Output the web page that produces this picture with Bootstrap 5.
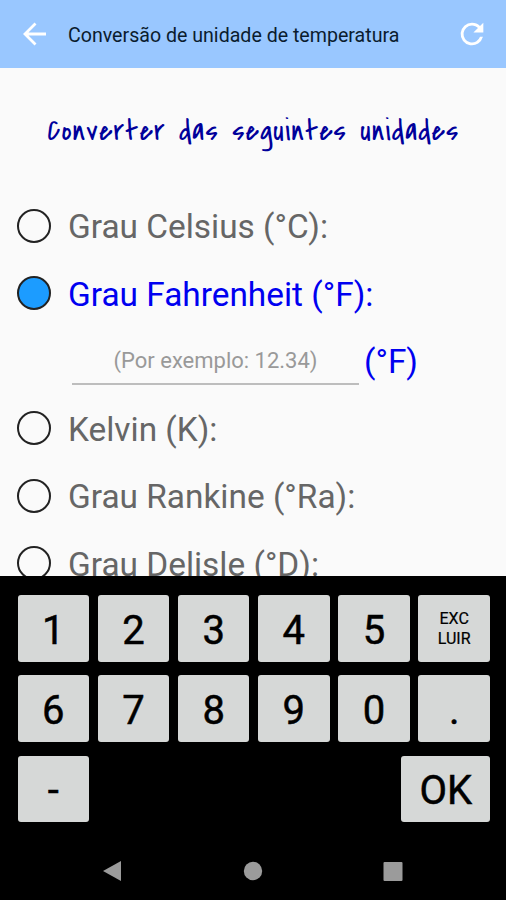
<!DOCTYPE html>
<html lang="pt">
<head>
<meta charset="utf-8">
<meta name="viewport" content="width=device-width, initial-scale=1">
<title>Conversão de unidade de temperatura</title>
<link href="https://cdn.jsdelivr.net/npm/bootstrap@5.3.0/dist/css/bootstrap.min.css" rel="stylesheet">
<style>
body { font-family: Roboto, sans-serif; background: #fafafa; color: #666; }
.screen { height: 900px; }
.topbar { height: 68px; background: #99c7ff; padding: 0 17px; }
.topbar-title { font-size: 19.6px; color: #0b1c2e; margin-left: 16px; padding-top: 3px; line-height: 1; white-space: nowrap; }
.heading { height: 124px; font-family: "Covered By Your Grace", "Reenie Beanie", Roboto, sans-serif; font-size: 30.5px; font-weight: 400; color: #00009b; letter-spacing: 1.15px; padding: 3px 0 0 1px; white-space: nowrap; }
.unit-row { height: 67.5px; padding-left: 17px; flex: none; font-size: 33.4px; line-height: 1; white-space: nowrap; }
.unit-row.selected { color: #0000f0; }
.dot { width: 34px; height: 34px; border: 2px solid #222; border-radius: 50%; margin-right: 17px; flex: none; }
.selected .dot { background: #1c9cff; }
.label-text { padding-top: 2px; }
.entry { padding-left: 72px; }
.entry-field { width: 287px; height: 48px; font-size: 22px; color: #999; border-bottom: 2px solid #bdbdbd; margin-right: 5px; padding-top: 2px; }
.keypad { height: 324px; background: #000; padding: 19px 16px 0 17.5px; flex: none; }
.keys { display: grid; grid-template-columns: repeat(6, 71.5px); column-gap: 8.7px; row-gap: 13.5px; }
.key { height: 66.8px; border: 0; border-radius: 3px; background: #d6d8d7; color: #000; font-size: 40px; -webkit-text-stroke: .5px #000; line-height: 1; padding: 5px 0 0; }
.key-small { font-size: 16px; line-height: 20px; padding: 2px 0 0; -webkit-text-stroke-width: .2px; }
.key-ok { grid-column: 5 / 7; justify-self: end; width: 88.5px; }
.navkeys { height: 97px; }
</style>
<script src="https://cdn.jsdelivr.net/npm/bootstrap@5.3.0/dist/js/bootstrap.bundle.min.js"></script>
</head>
<body>
<div class="screen d-flex flex-column overflow-hidden">
  <header class="topbar d-flex align-items-center flex-shrink-0">
    <svg width="35" height="34" viewBox="0 0 35 34" fill="none" stroke="#fff" stroke-width="2.8"><path d="M29 17H8M18.5 6.500 8 17l10.500 10.500"/></svg>
    <span class="topbar-title">Conversão de unidade de temperatura</span>
    <svg class="ms-auto" width="34" height="34" viewBox="0 0 24 24" fill="#fff"><path d="M17.65 6.350A7.950 7.950 0 0 0 12 4a8 8 0 1 0 7.730 10h-2.080A6 6 0 1 1 12 6c1.660 0 3.140.69 4.220 1.780L13 11h7V4z"/></svg>
  </header>
  <main class="flex-grow-1 d-flex flex-column overflow-hidden">
    <h1 class="heading d-flex align-items-center justify-content-center m-0 flex-shrink-0"><span>Converter das seguintes unidades</span></h1>
    <div class="unit-row d-flex align-items-center"><span class="dot"></span><span class="label-text">Grau Celsius (°C):</span></div>
    <div class="unit-row selected d-flex align-items-center"><span class="dot"></span><span class="label-text">Grau Fahrenheit (°F):</span></div>
    <div class="unit-row selected entry d-flex align-items-center"><span class="entry-field d-flex align-items-center justify-content-center">(Por exemplo: 12.34)</span><span class="label-text">(°F)</span></div>
    <div class="unit-row d-flex align-items-center"><span class="dot"></span><span class="label-text">Kelvin (K):</span></div>
    <div class="unit-row d-flex align-items-center"><span class="dot"></span><span class="label-text">Grau Rankine (°Ra):</span></div>
    <div class="unit-row d-flex align-items-center"><span class="dot"></span><span class="label-text">Grau Delisle (°D):</span></div>
  </main>
  <footer class="keypad">
    <div class="keys">
      <button class="key">1</button><button class="key">2</button><button class="key">3</button><button class="key">4</button><button class="key">5</button>
      <button class="key key-small">EXC<br>LUIR</button>
      <button class="key">6</button><button class="key">7</button><button class="key">8</button><button class="key">9</button><button class="key">0</button><button class="key">.</button>
      <button class="key">-</button><button class="key key-ok">OK</button>
    </div>
    <div class="navkeys d-flex align-items-center justify-content-center">
      <svg width="302" height="22" viewBox="0 0 302 22" fill="#9b9b9b"><path d="M0 11 18 1v20z"/><circle cx="150" cy="11" r="9.200"/><rect x="280.500" y="2" width="19" height="19" rx="1"/></svg>
    </div>
  </footer>
</div>
</body>
</html>
